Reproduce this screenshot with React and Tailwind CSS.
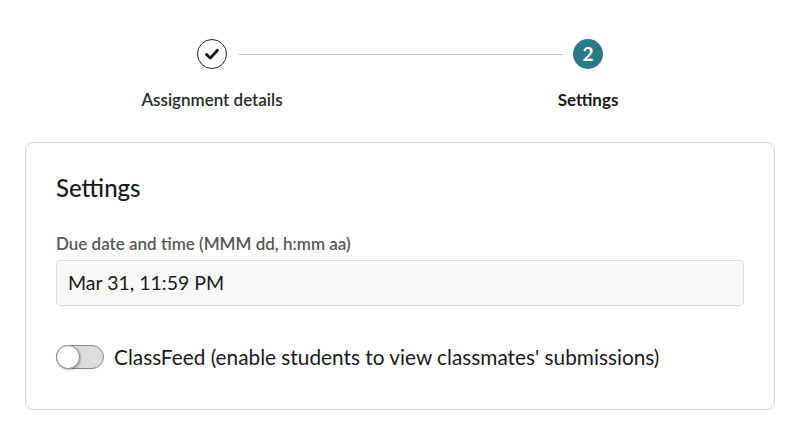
import React, { useState } from "react";

const font = { fontFamily: "Lato, 'Open Sans', sans-serif" };

const CheckCircle = () => (
  <div className="w-[30px] h-[30px] rounded-full border-[1.5px] border-[#222] bg-white flex items-center justify-center">
    <svg width="18" height="18" viewBox="0 0 18 18" fill="none">
      <path d="M3.5 9.5l3.8 3.6L14.5 5.2" stroke="#111" strokeWidth="2.8" strokeLinecap="round" strokeLinejoin="round" />
    </svg>
  </div>
);

const NumberCircle = ({ n }) => (
  <div className="w-[30px] h-[30px] rounded-full bg-[#287a89] text-white flex items-center justify-center text-[19px] font-bold">
    {n}
  </div>
);

export default function App() {
  const [classFeed, setClassFeed] = useState(false);

  return (
    <div className="w-[800px] h-[433px] bg-white text-[#1f1f1f] pt-[39px]" style={font}>
      {/* stepper */}
      <div className="w-[526px] mx-auto">
        <div className="flex items-center px-[60px]">
          <CheckCircle />
          <div className="flex-1 h-px bg-[#c4c4c4] ml-[11px] mr-[10px]" />
          <NumberCircle n={2} />
        </div>
        <div className="flex justify-between mt-[19px] leading-[24px]">
          <div className="w-[150px] text-center text-[17px] font-semibold text-[#2a2a2a]">Assignment details</div>
          <div className="w-[150px] text-center text-[17px] font-bold text-[#1a1a1a]">Settings</div>
        </div>
      </div>

      {/* settings card */}
      <div className="mx-[25px] mt-[30px] h-[268px] border border-[#d4d4d4] rounded-[8px] px-[30px] pt-[30px]">
        <h2 className="text-[24px] leading-[30px] font-medium text-[#1a1a1a]">Settings</h2>
        <label className="block mt-[30px] text-[17px] leading-[22px] font-semibold text-[#585858]">
          Due date and time (MMM dd, h:mm aa)
        </label>
        <div className="mt-[5px] h-[46px] bg-[#f8f8f8] border border-[#dcdcdc] rounded-[4px] flex items-center px-[11px] text-[19.5px] text-[#1a1a1a]">
          Mar 31, 11:59 PM
        </div>
        <div className="flex items-center mt-[37px] h-[28px] gap-[10px]">
          <button
            onClick={() => setClassFeed(!classFeed)}
            className={`relative w-[48px] h-[24px] rounded-full border border-[#8a8a8a] ${classFeed ? "bg-[#287a89]" : "bg-[#dcdcdc]"}`}
          >
            <span
              className={`absolute top-[-1px] w-[24px] h-[24px] rounded-full bg-white border border-[#8a8a8a] shadow-[1px_1px_2px_rgba(0,0,0,0.25)] ${classFeed ? "left-[23px]" : "left-[-1px]"}`}
            />
          </button>
          <span className="text-[20.8px] leading-[28px] text-[#1a1a1a]">ClassFeed (enable students to view classmates' submissions)</span>
        </div>
      </div>
    </div>
  );
}
